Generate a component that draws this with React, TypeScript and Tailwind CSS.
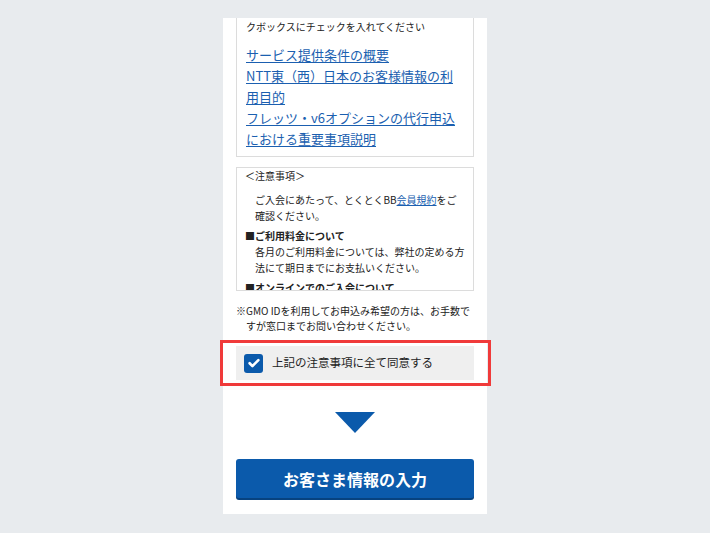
import React, { useState } from 'react';

const links = [
  'サービス提供条件の概要',
  'NTT東（西）日本のお客様情報の利用目的',
  'フレッツ・v6オプションの代行申込における重要事項説明',
];

export default function App() {
  const [agreed, setAgreed] = useState(true);

  return (
    <div
      className="min-h-[533px] w-full bg-[#e8ebee] pt-[18px]"
      style={{ fontFamily: '"Noto Sans CJK JP", "Noto Sans", sans-serif' }}
    >
      <div className="mx-auto w-[264px] bg-white px-[13px] pb-[16px] text-[#222]">
        {/* terms links (top of box scrolled off) */}
        <div className="border-x border-b border-[#dcdcdc] pl-[9px] pr-[9px] pt-[2px] pb-[7px]">
          <p className="text-[10px] leading-[14px] whitespace-nowrap">クボックスにチェックを入れてください</p>
          <ul className="mt-[10px]">
            {links.map((l) => (
              <li key={l} className="text-[13px] leading-[21px]">
                <a href="#" className="text-[#1b5fb0] underline underline-offset-2">
                  {l}
                </a>
              </li>
            ))}
          </ul>
        </div>

        {/* notes, scrollable box */}
        <div className="mt-[10px] h-[124px] overflow-hidden border border-[#dcdcdc] pl-[8px] pr-[6px] text-[10px]">
          <p className="pt-[1px] leading-[13px]">＜注意事項＞</p>
          <p className="mt-[10px] pl-[10px] leading-[15.5px]">
            ご入会にあたって、とくとくBB<a href="#" className="text-[#1b5fb0] underline">会員規約</a>をご
            <br />
            確認ください。
          </p>
          <p className="mt-[5px] font-bold leading-[16px]">■ご利用料金について</p>
          <p className="pl-[10px] leading-[16px]">各月のご利用料金については、弊社の定める方法にて期日までにお支払いください。</p>
          <p className="mt-[4px] font-bold leading-[16px]">■オンラインでのご入会について</p>
          <p className="pl-[10px] leading-[16px]">お申込み内容を確認のうえ、手続きを進めてください。</p>
        </div>

        <p className="mt-[12px] pl-[10px] -indent-[10px] pr-[2px] text-[10px] leading-[15px]">
          ※GMO IDを利用してお申込み希望の方は、お手数ですが窓口までお問い合わせください。
        </p>

        {/* agreement */}
        <div className="relative mt-[13px]">
          <div className="pointer-events-none absolute -left-[16px] -right-[17px] -top-[6px] -bottom-[6px] border-[3px] border-[#f03a3a]" />
          <label className="flex h-[34px] cursor-pointer items-center bg-[#efefef] pl-[8px]">
            <input
              type="checkbox"
              className="sr-only"
              checked={agreed}
              onChange={(e) => setAgreed(e.target.checked)}
            />
            <span
              className={`flex h-[19px] w-[19px] items-center justify-center rounded-[3px] ${
                agreed ? 'bg-[#0b5aab]' : 'border border-[#999] bg-white'
              }`}
            >
              {agreed && (
                <svg viewBox="0 0 16 16" className="h-[14px] w-[14px]" fill="none">
                  <path d="M3 8.3l3.2 3.2L13 4.7" stroke="white" strokeWidth={3} strokeLinecap="round" strokeLinejoin="round" />
                </svg>
              )}
            </span>
            <span className="ml-[9px] text-[11.5px] leading-none">上記の注意事項に全て同意する</span>
          </label>
        </div>

        {/* arrow */}
        <div className="mt-[32px] flex justify-center">
          <div className="h-0 w-0 border-x-[20px] border-t-[21px] border-x-transparent border-t-[#0b5aab]" />
        </div>

        <button className="mt-[26px] flex h-[39px] w-full items-center justify-center rounded-[3px] bg-[#0b5aab] text-[16px] font-bold text-white shadow-[0_2px_0_#07427f]">
          お客さま情報の入力
        </button>
      </div>
    </div>
  );
}
